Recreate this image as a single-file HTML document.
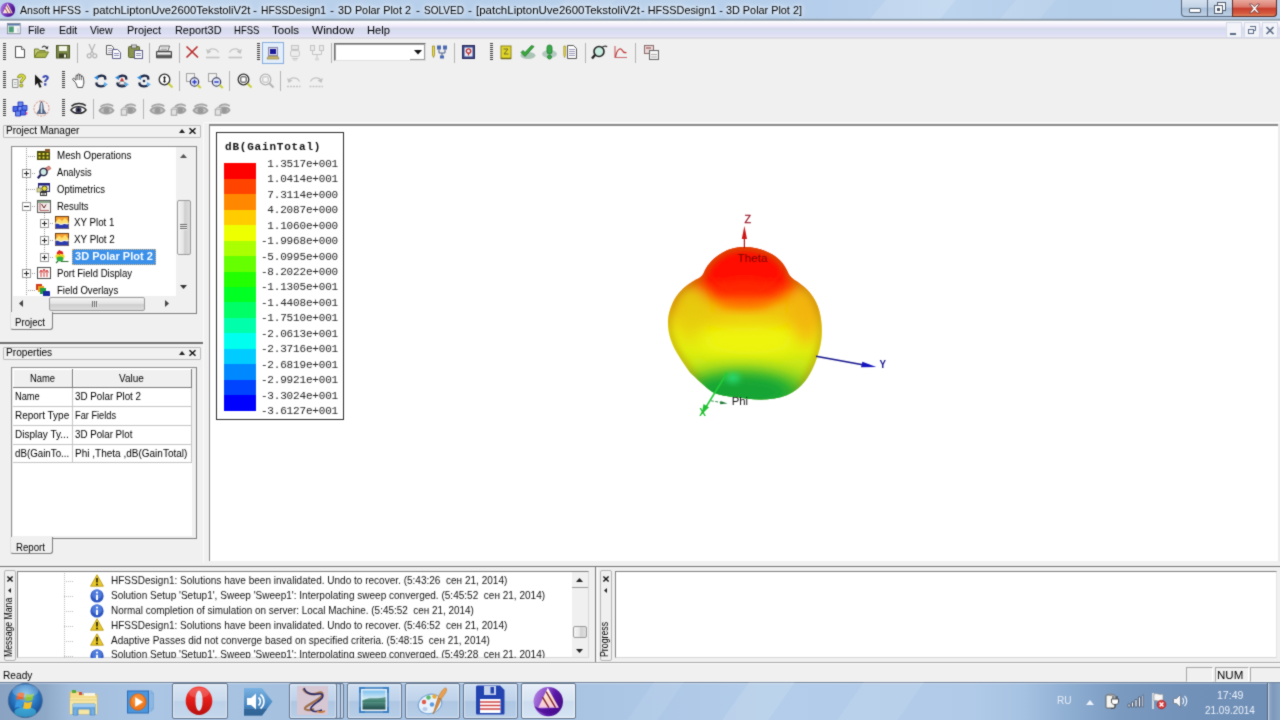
<!DOCTYPE html>
<html><head><meta charset="utf-8"><title>Ansoft HFSS</title>
<style>
*{box-sizing:border-box;margin:0;padding:0}
html,body{width:1280px;height:720px;overflow:hidden;background:#f0f0f0;font-family:"Liberation Sans",sans-serif;font-size:12px;color:#000}
.a{position:absolute}
svg{position:absolute;overflow:visible}
#title{left:0;top:0;width:1280px;height:21px;overflow:hidden;background:linear-gradient(180deg,rgba(0,0,0,0) 0,rgba(0,0,0,0) 18.3px,#8d9dab 19.2px,#8d9dab 20.3px,#f2f5f9 21px),linear-gradient(90deg,#bdd3ec 0,#c3d7ee 12%,#b9d0eb 25%,#b6ceea 40%,#bad1eb 52%,#b4cdea 62%,#bdd4ee 74%,#b4cde9 84%,#b7cfea 100%)}
#title .t{left:20px;top:3.700px;font-size:11px;line-height:12px;white-space:nowrap;color:#000;transform-origin:0 0;text-shadow:0 0 4px rgba(255,255,255,.9),0 0 7px rgba(255,255,255,.8),0 0 10px rgba(255,255,255,.6)}
#menu{left:0;top:21px;width:1280px;height:18px;background:linear-gradient(180deg,#fdfeff 0,#f6f3fc 3px,#efeafa 5px,#d6d8ec 7.5px,#d8e0ee 10px,#dcdcf6 12.5px,#e4e4f4 15.5px,#d2d3dc 17px,#e4e4e8 18px)}
#menu span{position:absolute;top:2.700px;font-size:11px;line-height:12px;white-space:nowrap;transform-origin:0 0}
.grip{position:absolute;width:3px;height:18px;background:repeating-linear-gradient(180deg,#3c3c3c 0,#3c3c3c 1px,rgba(0,0,0,0) 1px,rgba(0,0,0,0) 2px)}
.sep{position:absolute;width:1px;height:20px;background:#b2b2b2}
.hdr{position:absolute;height:13px;border:1px solid #b9b9b9;border-radius:1px;background:#f1f1f1;font-size:10px;line-height:10px;padding-left:2px;white-space:nowrap}
.tr{position:absolute;font-size:10.5px;white-space:nowrap;line-height:12px}
.msg{position:absolute;left:110px;font-size:10.5px;white-space:nowrap;line-height:12px;color:#111}
.lg{position:absolute;right:5px;font-family:"Liberation Mono",monospace;font-size:11px;letter-spacing:-0.18px;line-height:12px;white-space:pre;color:#262626}
#w{position:absolute;left:0;top:0;width:1280px;height:720px;overflow:hidden;background:#f0f0f0;filter:url(#soft)}
</style></head><body><svg width="0" height="0" style="position:absolute"><defs><filter id="soft" x="0" y="0" width="100%" height="100%" color-interpolation-filters="sRGB"><feConvolveMatrix order="3" kernelMatrix="0.03 0.09 0.03 0.09 0.52 0.09 0.03 0.09 0.03" divisor="1" edgeMode="duplicate" preserveAlpha="true"/></filter></defs></svg><div id="w">
<!-- TITLE BAR -->
<div id="title" class="a"><!-- streak --><div class="a" style="left:880px;top:-5px;width:70px;height:24px;background:rgba(255,255,255,.14);transform:skewX(-40deg)"></div><div class="a" style="left:1010px;top:-5px;width:40px;height:24px;background:rgba(255,255,255,.10);transform:skewX(-40deg)"></div><div class="a" style="left:560px;top:-5px;width:50px;height:24px;background:rgba(255,255,255,.08);transform:skewX(-40deg)"></div><div class="a t" style="left:20px;transform:scaleX(0.960)">Ansoft HFSS</div><div class="a t" style="left:84.5px;transform:scaleX(1.091)">-</div><div class="a t" style="left:92.5px;transform:scaleX(1.022)">patchLiptonUve2600TekstoliV2t</div><div class="a t" style="left:252.5px;transform:scaleX(1.091)">-</div><div class="a t" style="left:261px;transform:scaleX(0.933)">HFSSDesign1</div><div class="a t" style="left:329.5px;transform:scaleX(1.091)">-</div><div class="a t" style="left:338px;transform:scaleX(0.986)">3D Polar Plot 2</div><div class="a t" style="left:415.5px;transform:scaleX(1.091)">-</div><div class="a t" style="left:424px;transform:scaleX(0.913)">SOLVED</div><div class="a t" style="left:467.5px;transform:scaleX(1.091)">-</div><div class="a t" style="left:476px;transform:scaleX(1.043)">[patchLiptonUve2600TekstoliV2t</div><div class="a t" style="left:641px;transform:scaleX(0.986)">- HFSSDesign1 - 3D Polar Plot 2]</div>
<!-- app icon -->
<svg style="left:0px;top:2.200px" width="15.500" height="15.500" viewBox="0 0 16 16"><defs><linearGradient id="ti" x1="0" y1="0" x2="1" y2=".4"><stop offset="0" stop-color="#b88ae6"/><stop offset=".5" stop-color="#7a3cc0"/><stop offset="1" stop-color="#4a108c"/></linearGradient></defs><circle cx="8" cy="8" r="7.600" fill="url(#ti)"/><path d="M7.700 1.500 L13.200 11.500 H2.800Z" fill="#fde8dc"/><path d="M6.900 3.400 L11.600 11.500 M5.100 6.200 L8.300 11.500" stroke="#7a1a2a" stroke-width=".8"/></svg>
<!-- caption buttons -->
<div class="a" style="left:1181px;top:0;width:96px;height:17px;border:1px solid #56667a;border-top:none;border-radius:0 0 4px 4px;background:linear-gradient(180deg,#d4e0ee 0,#c3d3e6 45%,#a9bfd8 50%,#bccfe4 100%)"></div>
<div class="a" style="left:1207px;top:0;width:1px;height:16px;background:#56667a"></div>
<div class="a" style="left:1232px;top:0;width:45px;height:17px;border:1px solid #5b2a26;border-top:none;border-radius:0 0 4px 0;background:linear-gradient(180deg,#e9a99d 0,#d9776a 45%,#c63d2c 50%,#d65b40 85%,#e08a60 100%)"></div>
<div class="a" style="left:1189px;top:8px;width:12px;height:5px;border:1px solid #4c5a6b;border-radius:1px;background:#fff"></div>
<svg style="left:1213px;top:1px" width="14" height="14" viewBox="0 0 14 14"><rect x="4.5" y="1.5" width="8" height="8" fill="#fff" stroke="#4c5a6b"/><rect x="1.5" y="4.5" width="8" height="8" fill="#fff" stroke="#4c5a6b"/><rect x="4" y="7" width="3" height="3" fill="#4c5a6b"/></svg>
<svg style="left:1248px;top:3px" width="13" height="11" viewBox="0 0 13 11"><path d="M1.5 1 L4 1 L6.5 3.8 L9 1 L11.5 1 L8 5.5 L11.5 10 L9 10 L6.5 7.2 L4 10 L1.5 10 L5 5.5Z" fill="#fff" stroke="#6b3b3b" stroke-width=".8"/></svg>
</div>
<!-- MENU BAR -->
<div id="menu" class="a">
<svg style="left:6.800px;top:2.200px" width="14.500" height="12" viewBox="0 0 17 14"><rect x=".5" y=".5" width="15" height="12" fill="#fff" stroke="#7b8794"/><rect x="1" y="1" width="14" height="2" fill="#5a78a8"/><rect x="2" y="4" width="6" height="7" fill="#4e9c78"/><rect x="9" y="4" width="5" height="7" fill="#f2f2f2"/><rect x="12" y="6" width="2" height="5" fill="#c9d3e0"/></svg>
<span style="left:28.4px;transform:scaleX(0.959)">File</span><span style="left:58.6px;transform:scaleX(0.964)">Edit</span><span style="left:90.3px;transform:scaleX(0.951)">View</span><span style="left:126.9px;transform:scaleX(0.993)">Project</span><span style="left:174.5px;transform:scaleX(0.987)">Report3D</span><span style="left:233.8px;transform:scaleX(0.868)">HFSS</span><span style="left:272px;transform:scaleX(1.052)">Tools</span><span style="left:312px;transform:scaleX(1.073)">Window</span><span style="left:366.5px;transform:scaleX(1.017)">Help</span>
<!-- MDI buttons -->
<div class="a" style="left:1226px;top:1px;width:16px;height:16px;border:1px solid #d5d9e6;background:#f2f4fa"></div>
<div class="a" style="left:1244px;top:1px;width:16px;height:16px;border:1px solid #d5d9e6;background:#f2f4fa"></div>
<div class="a" style="left:1262px;top:1px;width:16px;height:16px;border:1px solid #d5d9e6;background:#f2f4fa"></div>
<div class="a" style="left:1230px;top:12px;width:6px;height:2px;background:#5a6a84"></div>
<svg style="left:1247px;top:4px" width="10" height="10" viewBox="0 0 10 10"><path d="M3.5 1.5 H8.5 V5.5 H7" fill="none" stroke="#5a6a84"/><path d="M3 1.5 H9" stroke="#5a6a84"/><rect x="1.5" y="4.5" width="5" height="4" fill="none" stroke="#5a6a84"/><path d="M1 4.5 H7" stroke="#5a6a84"/></svg>
<svg style="left:1265px;top:5px" width="10" height="9" viewBox="0 0 10 9"><path d="M1.5 1 L8.5 8 M8.5 1 L1.5 8" stroke="#5a6a84" stroke-width="1.6"/></svg>
</div>
<!-- TOOLBAR ROW 1 -->
<div id="tb1" class="a" style="left:0;top:39px;width:1280px;height:28px">
<div class="grip" style="left:3px;top:4px"></div>
<!-- new -->
<svg style="left:12px;top:5px" width="16" height="16" viewBox="0 0 16 16"><path d="M3.5 2.5 H9.5 L12.5 5.5 V13.5 H3.5Z" fill="#fff" stroke="#4a4a4a"/><path d="M9.5 2.5 V5.5 H12.5" fill="#e8e8e8" stroke="#4a4a4a" stroke-width=".8"/></svg>
<!-- open -->
<svg style="left:33px;top:5px" width="17" height="16" viewBox="0 0 17 16"><path d="M1.5 13.5 V5 H5.5 L6.5 6.5 H12 V8" fill="#c9cf7a" stroke="#6f7a2a"/><path d="M1.5 13.5 L4.5 8 H15.5 L12.5 13.5Z" fill="#a9b44a" stroke="#6f7a2a"/><path d="M9 3.5 C10.5 1.5 13 1.8 14 4" fill="none" stroke="#333" stroke-width="1.1"/><path d="M15.5 2 L14.5 5.5 L12 4Z" fill="#333"/></svg>
<!-- save -->
<svg style="left:55px;top:5px" width="16" height="16" viewBox="0 0 16 16"><rect x="1.5" y="1.5" width="13" height="12.5" fill="#7c8a47" stroke="#4b5628"/><rect x="4" y="2" width="8" height="5" fill="#f3f4ea"/><rect x="4" y="9.5" width="8" height="4.5" fill="#3e4424"/><rect x="9" y="10.5" width="2" height="3" fill="#f3f4ea"/></svg>
<div class="sep" style="left:77px;top:4px"></div>
<!-- cut (gray) -->
<svg style="left:84px;top:4px" width="16" height="17" viewBox="0 0 16 17"><path d="M5 1 L9.5 11 M11 1 L6.5 11" stroke="#b4b4b4" stroke-width="1.2" fill="none"/><circle cx="5.2" cy="12.8" r="2" fill="none" stroke="#b4b4b4" stroke-width="1.2"/><circle cx="10.8" cy="12.8" r="2" fill="none" stroke="#b4b4b4" stroke-width="1.2"/></svg>
<!-- copy -->
<svg style="left:105px;top:5px" width="17" height="16" viewBox="0 0 17 16"><path d="M1.5 1.5 H6.5 L8.5 3.5 V10.5 H1.5Z" fill="#fff" stroke="#5a5a5a"/><path d="M3 4.5 H7 M3 6.5 H7 M3 8.5 H7" stroke="#8a8a9a" stroke-width=".8"/><path d="M7.5 5.5 H12.5 L15.5 8.5 V14.5 H7.5Z" fill="#fff" stroke="#5b5b8a"/><path d="M9 9.5 H14 M9 11.5 H14" stroke="#7a7aa8" stroke-width=".9"/></svg>
<!-- paste -->
<svg style="left:127px;top:5px" width="17" height="16" viewBox="0 0 17 16"><rect x="1.5" y="2.5" width="11" height="11" rx="1" fill="#8a9450" stroke="#5a6330"/><rect x="4.5" y="1" width="5" height="3" fill="#d8d8d8" stroke="#5a5a5a" stroke-width=".8"/><rect x="7.5" y="6.5" width="8" height="8" fill="#fff" stroke="#5b5b8a"/><path d="M9 9.5 H14 M9 11.5 H14" stroke="#7a7aa8" stroke-width=".9"/></svg>
<div class="sep" style="left:149px;top:4px"></div>
<!-- print -->
<svg style="left:155px;top:5px" width="18" height="16" viewBox="0 0 18 16"><path d="M5 2 H14.5 L13 7 H3.5Z" fill="#fff" stroke="#555" stroke-width=".9"/><path d="M6 4 H12.5 M5.5 5.5 H12" stroke="#888" stroke-width=".7"/><path d="M1.5 7.5 H16.5 V12 H1.5Z" fill="#bdbdbd" stroke="#444"/><path d="M1.5 12 H16.5 V13.8 H1.5Z" fill="#6b6b6b" stroke="#444"/><path d="M3 9.5 H15" stroke="#fff" stroke-width=".8"/></svg>
<div class="sep" style="left:179px;top:4px"></div>
<!-- delete X -->
<svg style="left:185px;top:6px" width="15" height="14" viewBox="0 0 15 14"><path d="M1.5 1.5 L13 12.5 M12.5 1.5 L1.5 12.5" stroke="#b82a2a" stroke-width="1.6" fill="none"/></svg>
<!-- undo / redo gray -->
<svg style="left:205px;top:7px" width="16" height="13" viewBox="0 0 16 13"><path d="M3 6 C4 2 11 1.5 13.5 6.5" fill="none" stroke="#c2c2c2" stroke-width="1.2"/><path d="M1 3 L2.5 8 L6.5 5.5Z" fill="#c2c2c2"/><path d="M1 11.5 H14.5" stroke="#c2c2c2" stroke-width="1.6"/></svg>
<svg style="left:227px;top:7px" width="16" height="13" viewBox="0 0 16 13"><path d="M13 6 C12 2 5 1.5 2.5 6.5" fill="none" stroke="#c2c2c2" stroke-width="1.2"/><path d="M15 3 L13.5 8 L9.5 5.5Z" fill="#c2c2c2"/><path d="M1.5 11.5 H15" stroke="#c2c2c2" stroke-width="1.6"/></svg>
<div class="grip" style="left:257px;top:4px"></div>
<!-- selected button -->
<div class="a" style="left:262px;top:3px;width:22px;height:22px;border:1px solid #84acdd;background:#e3eefb"></div>
<svg style="left:267px;top:8px" width="12" height="13" viewBox="0 0 12 13"><rect x="1.5" y=".5" width="9" height="8" fill="#d9d9e8" stroke="#8a8aa8"/><rect x="3" y="2" width="6" height="5" fill="#1a1a9a"/><path d="M1 9.5 H11 L12 12 H0Z" fill="#c8b46a" stroke="#8a7a3a" stroke-width=".6"/></svg>
<svg style="left:289px;top:6px" width="12" height="16" viewBox="0 0 12 16"><rect x="2.5" y=".5" width="7" height="4" fill="#e6e6e6" stroke="#c4c4c4"/><rect x="1.5" y="5.5" width="9" height="6" rx="2" fill="#ececec" stroke="#c4c4c4"/><path d="M3 13.5 H9 M4 15 H8" stroke="#c9c9c9"/></svg>
<svg style="left:309px;top:6px" width="16" height="16" viewBox="0 0 16 16"><rect x="1.5" y=".5" width="4" height="5" fill="#e9e9e9" stroke="#c4c4c4"/><rect x="10.5" y=".5" width="4" height="5" fill="#e9e9e9" stroke="#c4c4c4"/><path d="M3.5 6 V9.5 H12.5 V6 M8 9.5 V13" fill="none" stroke="#c4c4c4"/><rect x="6" y="13" width="4" height="2.5" fill="#d9d9d9"/></svg>
<div class="sep" style="left:331px;top:4px"></div>
<!-- combo -->
<div class="a" style="left:334px;top:4px;width:92px;height:18px;background:#fff;border:1px solid #6e6e6e;border-right-color:#e0e0e0;border-bottom-color:#e0e0e0;box-shadow:inset 1px 1px 0 #a0a0a0"></div>
<div class="a" style="left:410px;top:6px;width:15px;height:15px;background:#fff;border-right:1px solid #999;border-bottom:1px solid #999"></div>
<svg style="left:414px;top:11px" width="8" height="5" viewBox="0 0 8 5"><path d="M0 0 H8 L4 4.5Z" fill="#111"/></svg>
<!-- pencil+net -->
<svg style="left:431px;top:5px" width="17" height="16" viewBox="0 0 17 16"><path d="M1.5 2 V11 L2.5 13.5 L3.5 11 V2Z" fill="#f2e23a" stroke="#8a7a1a" stroke-width=".7"/><rect x="6" y="1.5" width="4" height="4" fill="#4a6ab0"/><rect x="12" y="1.5" width="4" height="4" fill="#4a6ab0"/><path d="M8 5.5 V9 H14 V5.5 M11 9 V12" fill="none" stroke="#4a5a8a"/><rect x="9" y="11.5" width="4" height="3" fill="#4a6ab0"/></svg>
<div class="sep" style="left:454px;top:4px"></div>
<!-- Q box -->
<svg style="left:462px;top:6px" width="13" height="14" viewBox="0 0 13 14"><rect x=".5" y=".5" width="12" height="13" fill="#3a4a8a" stroke="#2a2a5a"/><rect x="2.5" y="2.5" width="8" height="9" fill="#e8ecf8"/><circle cx="6.5" cy="6" r="2.2" fill="none" stroke="#c02a2a" stroke-width="1.3"/><path d="M6.5 8 V10.5" stroke="#c02a2a" stroke-width="1.2"/></svg>
<div class="grip" style="left:490px;top:4px"></div>
<!-- yellow book -->
<svg style="left:500px;top:6px" width="12" height="15" viewBox="0 0 12 15"><rect x="1" y="1" width="10" height="12.5" fill="#e2d62a" stroke="#8a841a"/><path d="M1 13.5 H11" stroke="#6a6414" stroke-width="1.4"/><path d="M3.5 4 L8 4 L4 9 L8.5 9" fill="none" stroke="#6a6a2a" stroke-width="1"/></svg>
<!-- green check -->
<svg style="left:519px;top:5px" width="17" height="16" viewBox="0 0 17 16"><ellipse cx="9" cy="11.5" rx="7.5" ry="3.5" fill="#a9c4b4"/><path d="M2 8.5 L6 12.5 L15 2.5 L12.5 1.5 L6 8.5 L4 6.5Z" fill="#3aa83a" stroke="#1a7a2a" stroke-width=".8"/></svg>
<!-- green excl -->
<svg style="left:541px;top:5px" width="17" height="16" viewBox="0 0 17 16"><ellipse cx="8.5" cy="10" rx="7.5" ry="4" fill="#b4c8c0"/><rect x="6" y="1" width="5" height="9" rx="2.5" fill="#3aa84a" stroke="#1a7a2a" stroke-width=".8"/><circle cx="8.5" cy="13" r="2" fill="#3aa84a" stroke="#1a7a2a" stroke-width=".8"/></svg>
<!-- doc w pencil -->
<svg style="left:563px;top:5px" width="15" height="16" viewBox="0 0 15 16"><path d="M.8 2 V11 L1.6 13.5 L2.4 11 V2Z" fill="#f2e23a" stroke="#8a7a1a" stroke-width=".6"/><path d="M4.5 1.5 H10.5 L13.5 4.5 V14.5 H4.5Z" fill="#fff" stroke="#555"/><path d="M6 5.5 H12 M6 7.5 H12 M6 9.5 H12 M6 11.5 H12" stroke="#8a8ab0" stroke-width=".9"/></svg>
<div class="sep" style="left:585px;top:4px"></div>
<!-- lens -->
<svg style="left:591px;top:6px" width="17" height="15" viewBox="0 0 17 15"><circle cx="8" cy="6.5" r="5" fill="#c8ece0" stroke="#222" stroke-width="1.6"/><path d="M4 10 L1 13.5" stroke="#222" stroke-width="2.4"/><path d="M11 2.5 C13 .5 15.5 1 16 2" fill="none" stroke="#333" stroke-width="1.2"/></svg>
<!-- curve -->
<svg style="left:613px;top:6px" width="15" height="14" viewBox="0 0 15 14"><path d="M2 1 V12.5 H14" fill="none" stroke="#c86a6a" stroke-width="1.2"/><path d="M2.5 12 C4 3 8 3 9 5 C10 7 12 8 13.5 7.5" fill="none" stroke="#c03030" stroke-width="1.2"/></svg>
<div class="sep" style="left:635px;top:4px"></div>
<!-- last -->
<svg style="left:643px;top:6px" width="16" height="15" viewBox="0 0 16 15"><rect x="1.5" y=".5" width="9" height="8" fill="#e8d8d8" stroke="#8a6a6a"/><rect x="6.5" y="5.5" width="9" height="9" fill="#f4f4f4" stroke="#666"/><path d="M8.5 9.5 h1 m1 0 h1 m1 0 h1 M8.5 12 h1 m1 0 h1 m1 0 h1" stroke="#666"/><rect x="3" y="2" width="5" height="2" fill="#b88"/></svg>
</div>
<!-- shared symbols -->
<svg width="0" height="0" style="left:0;top:0"><defs>
<symbol id="rot" viewBox="0 0 14 14"><path d="M2.800 4 C4.200 1.300 9.500 1 11 3 L11.400 5.600" fill="none" stroke="#1d2744" stroke-width="2.300"/><path d="M2.300 8.400 L2.800 10.800 C4.500 13 9.800 12.800 11.300 10.600" fill="none" stroke="#1d2744" stroke-width="2.300"/><path d="M0 3.600 L4.200 1.400 L4 6Z" fill="#2a86dc"/><path d="M14 10.400 L9.800 12.600 L10 8Z" fill="#58aef0"/></symbol>
<symbol id="geye" viewBox="0 0 16 14"><path d="M1 8.5 C3.5 4 12.5 4 15 8.500 C12.5 12.5 3.5 12.5 1 8.500Z" fill="#c4c4c4" stroke="#a0a0a0" stroke-width="1.8"/><circle cx="8" cy="8.500" r="3" fill="#989898"/><path d="M1.500 4.200 C5 .8 11 .8 15 3.200 L14.500 5 C11 3 5.500 3 2.500 5.500Z" fill="#a4a4a4"/></symbol>
<symbol id="geye2" viewBox="0 0 16 14"><path d="M3.500 8.500 C5.500 4.500 13 4.200 15 8 C13 12 6.500 12 3.500 8.500Z" fill="#c4c4c4" stroke="#a0a0a0" stroke-width="1.800"/><circle cx="9.800" cy="8.200" r="2.700" fill="#989898"/><path d="M4 4 C7 .8 12 .8 15.500 3 L15 4.800 C12 3 7.500 3 5 5.300Z" fill="#a4a4a4"/><rect x=".8" y="7.500" width="5.400" height="5.700" fill="#e2e2e2" stroke="#a8a8a8" stroke-width="1.100"/><path d="M.8 7.500 L2.800 5.300 H7.600 L6.200 7.500" fill="#d4d4d4" stroke="#a8a8a8" stroke-width=".9"/></symbol>
</defs></svg>
<!-- TOOLBAR ROW 2 -->
<div id="tb2" class="a" style="left:0;top:67px;width:1280px;height:28px">
<div class="grip" style="left:3px;top:4px"></div>
<!-- help doc -->
<svg style="left:12px;top:6px" width="15" height="16" viewBox="0 0 15 16"><path d="M.5 6.5 H6 V14.5 H.5Z" fill="#f4f4f4" stroke="#8a8a8a"/><path d="M2 9.5 H4.5 M2 11.5 H4.5" stroke="#9aa" stroke-width=".8"/><path d="M5.5 4.5 C5.5 0 13.5 0 13.5 4.5 C13.5 7 10.5 7 10.5 9.5 H8 C8 6.5 10.5 6.3 10.5 4.6 C10.5 3.3 8.3 3.3 8.2 4.8Z" fill="#d8dc3a" stroke="#7a8020" stroke-width=".8"/><rect x="7.8" y="11" width="3" height="3" rx="1" fill="#d8dc3a" stroke="#7a8020" stroke-width=".8"/></svg>
<!-- arrow ? -->
<svg style="left:34px;top:7px" width="16" height="15" viewBox="0 0 16 15"><path d="M1 .5 V11.5 L3.6 9 L5.6 13.8 L7.6 13 L5.6 8.4 H9Z" fill="#1a1a1a"/><path d="M8.3 3.8 C8.3 .2 14.8 .2 14.8 3.8 C14.8 6 12.3 6 12.3 8 H10.2 C10.2 5.4 12.5 5.3 12.5 3.9 C12.5 2.8 10.6 2.8 10.5 4Z" fill="#3a4ab0"/><rect x="10.1" y="9.2" width="2.3" height="2.4" fill="#3a4ab0"/></svg>
<div class="grip" style="left:62px;top:4px"></div>
<!-- hand -->
<svg style="left:71px;top:6px" width="16" height="16" viewBox="0 0 16 16"><path d="M4.5 9.5 L2 7 C1 6 2.2 4.8 3.2 5.6 L5 7.2 V3 C5 1.8 6.8 1.8 6.8 3 V1.8 C6.8 .6 8.6 .6 8.6 1.8 V2.6 C8.6 1.6 10.4 1.6 10.4 2.8 V4 C10.4 3 12.2 3 12.2 4.2 L12.8 8 C13.2 11 12 12.5 11.5 14.5 H6.5 C6 12.5 5.2 11 4.5 9.5Z" fill="#fff" stroke="#3a3a3a" stroke-width=".9"/><path d="M6.8 3 V7 M8.6 2.6 V7 M10.4 4 V7.2" stroke="#3a3a3a" stroke-width=".7"/></svg>
<svg style="left:94px;top:7px" width="14" height="14"><use href="#rot"/></svg>
<svg style="left:115px;top:7px" width="14" height="14"><use href="#rot"/><path d="M7 3.5 L9 7 H5Z" fill="#d03030"/><ellipse cx="7" cy="9" rx="3" ry="1.5" fill="#fff" stroke="#445" stroke-width=".6"/></svg>
<svg style="left:137px;top:7px" width="14" height="14"><use href="#rot"/><circle cx="7" cy="7" r="1.3" fill="#1f2a4a"/></svg>
<!-- zoom -->
<svg style="left:158px;top:6px" width="16" height="16" viewBox="0 0 16 16"><circle cx="6.5" cy="6.5" r="5.3" fill="#fff" stroke="#2a2a2a" stroke-width="1.3"/><path d="M6.5 3 L8 5 H5Z M6.5 10 L8 8 H5Z" fill="#111"/><path d="M6.5 4.5 V8.5" stroke="#111" stroke-width="1.4"/><path d="M10.5 10.5 L14.5 14.5" stroke="#c8d03a" stroke-width="2.2"/></svg>
<div class="sep" style="left:179px;top:4px"></div>
<!-- zoom in / out (dotted box) -->
<svg style="left:186px;top:6px" width="16" height="16" viewBox="0 0 16 16"><rect x=".5" y=".5" width="8" height="8" fill="none" stroke="#555" stroke-dasharray="1 1"/><circle cx="8.5" cy="9" r="4.2" fill="#dfe6fa" stroke="#2a2a4a" stroke-width="1.1"/><path d="M6.3 9 H10.7 M8.5 6.8 V11.2" stroke="#2a3ac0" stroke-width="1.5"/><path d="M11.5 12 L14.8 15" stroke="#c8d03a" stroke-width="2.2"/></svg>
<svg style="left:208px;top:6px" width="16" height="16" viewBox="0 0 16 16"><rect x=".5" y=".5" width="8" height="8" fill="none" stroke="#555" stroke-dasharray="1 1"/><circle cx="8.5" cy="9" r="4.2" fill="#dfe6fa" stroke="#2a2a4a" stroke-width="1.1"/><path d="M6.3 9 H10.7" stroke="#2a3ac0" stroke-width="1.5"/><path d="M11.5 12 L14.8 15" stroke="#c8d03a" stroke-width="2.2"/></svg>
<div class="sep" style="left:229px;top:4px"></div>
<!-- fit -->
<svg style="left:237px;top:6px" width="16" height="16" viewBox="0 0 16 16"><circle cx="6.5" cy="6.5" r="5.3" fill="#fff" stroke="#2a2a2a" stroke-width="1.3"/><rect x="3.8" y="3.8" width="5.4" height="5.4" rx="1" fill="none" stroke="#333" stroke-width="1"/><path d="M10.5 10.5 L14.5 14.5" stroke="#c8d03a" stroke-width="2.2"/></svg>
<svg style="left:259px;top:6px" width="16" height="16" viewBox="0 0 16 16"><circle cx="6.5" cy="6.5" r="5.3" fill="#f6f6f6" stroke="#b4b4b4" stroke-width="1.3"/><rect x="3.8" y="3.8" width="5.4" height="5.4" rx="1" fill="none" stroke="#b8b8b8" stroke-width="1"/><path d="M10.5 10.5 L14.5 14.5" stroke="#b4b4b4" stroke-width="2.2"/></svg>
<div class="sep" style="left:280px;top:4px"></div>
<svg style="left:286px;top:8px" width="16" height="13" viewBox="0 0 16 13"><path d="M3 6 C4 2 11 1.5 13.5 6.5" fill="none" stroke="#c2c2c2" stroke-width="1.2"/><path d="M1 3 L2.5 8 L6.5 5.5Z" fill="#c2c2c2"/><path d="M1 11.5 h2 m1 0 h2 m1 0 h2 m1 0 h2 m1 0 h1.5" stroke="#c2c2c2" stroke-width="1.4"/></svg>
<svg style="left:308px;top:8px" width="16" height="13" viewBox="0 0 16 13"><path d="M13 6 C12 2 5 1.5 2.5 6.5" fill="none" stroke="#c2c2c2" stroke-width="1.2"/><path d="M15 3 L13.5 8 L9.5 5.5Z" fill="#c2c2c2"/><path d="M1.5 11.5 h2 m1 0 h2 m1 0 h2 m1 0 h2 m1 0 h1.5" stroke="#c2c2c2" stroke-width="1.4"/></svg>
</div>
<!-- TOOLBAR ROW 3 -->
<div id="tb3" class="a" style="left:0;top:95px;width:1280px;height:28px">
<div class="grip" style="left:3px;top:4px"></div>
<!-- blue cubes -->
<svg style="left:12px;top:6px" width="16" height="16" viewBox="0 0 16 16"><g stroke="#1a2ab0" stroke-width=".8"><path d="M6 1 L11 1 L11 5.5 L6 5.5Z" fill="#6a8af0"/><path d="M1 5.5 L6 5.5 L6 10.5 L1 10.5Z" fill="#4a6ae8"/><path d="M6 5.5 L11 5.5 L11 10.5 L6 10.5Z" fill="#7a9af4"/><path d="M10 4.5 L15 4.5 L15 9.5 L10 9.5Z" fill="#5a7aec"/><path d="M3.5 10 L8.5 10 L8.5 15 L3.5 15Z" fill="#6a8af0"/><path d="M8.5 9 L13.5 9 L13.5 14 L8.5 14Z" fill="#4a6ae8"/></g><path d="M13 12 L15.5 11 L15 14Z" fill="#e04090"/></svg>
<!-- rocket circle -->
<svg style="left:33px;top:5px" width="17" height="17" viewBox="0 0 17 17"><circle cx="8.5" cy="8.5" r="7.5" fill="#f6f0f0" stroke="#d08a7a" stroke-width="1" stroke-dasharray="2.4 1.2"/><path d="M8.5 1.5 C10.3 4 10.5 9 10.2 13.5 H6.8 C6.5 9 6.7 4 8.5 1.5Z" fill="#8aa0b8" stroke="#3a4a6a" stroke-width=".8"/><path d="M6.8 9 L3.8 13.5 H6.8Z M10.2 9 L13.2 13.5 H10.2Z" fill="#5a7090" stroke="#3a4a6a" stroke-width=".6"/><path d="M8.5 3 V13" stroke="#e8eef6" stroke-width=".9"/></svg>
<div class="grip" style="left:62px;top:4px"></div>
<!-- eye -->
<svg style="left:70px;top:7px" width="17" height="14" viewBox="0 0 17 14"><path d="M1 8 C4 3.5 13 3.5 16 8 C13 12.5 4 12.5 1 8Z" fill="#fff" stroke="#222" stroke-width="1.4"/><circle cx="8.5" cy="8" r="3" fill="#3a3a5a"/><circle cx="8.5" cy="8" r="1.2" fill="#111"/><path d="M1.5 4.2 C5 .8 12 .8 15.8 3.6" fill="none" stroke="#222" stroke-width="1.6"/></svg>
<div class="sep" style="left:93px;top:4px"></div>
<svg style="left:98px;top:7px" width="17" height="14"><use href="#geye"/></svg>
<svg style="left:120px;top:7px" width="17" height="14"><use href="#geye2"/></svg>
<div class="sep" style="left:143px;top:4px"></div>
<svg style="left:149px;top:7px" width="17" height="14"><use href="#geye"/></svg>
<svg style="left:170px;top:7px" width="17" height="14"><use href="#geye2"/></svg>
<svg style="left:192px;top:7px" width="17" height="14"><use href="#geye"/></svg>
<svg style="left:214px;top:7px" width="17" height="14"><use href="#geye2"/></svg>
</div>
<!-- LEFT: PROJECT MANAGER -->
<div id="pm" class="a" style="left:0;top:123px;width:206px;height:220px">
<div class="hdr" style="left:3px;top:1.600px;width:198px"><span style="display:inline-block;transform-origin:0 0;transform:scaleX(1)">Project Manager</span></div>
<svg style="left:179px;top:6px" width="6" height="4" viewBox="0 0 6 4"><path d="M0 4 L3 0 L6 4Z" fill="#222"/></svg>
<svg style="left:189px;top:5px" width="7" height="6" viewBox="0 0 7 6"><path d="M.5 .3 L6.5 5.7 M6.5 .3 L.5 5.7" stroke="#111" stroke-width="1.5"/></svg>
<div class="a" style="left:11px;top:22.600px;width:186px;height:168.400px;background:#f0f0f0;border:1.5px solid #7c7c7c;border-left-color:#8c8c8c;border-top-color:#8c8c8c"></div><div class="a" style="left:12.500px;top:23.500px;width:179.500px;height:165px;background:#fff"></div>
<div class="a" style="left:14px;top:25px;width:162px;height:148px;overflow:hidden">
<div class="a" style="left:12.0px;top:0;width:1px;height:148px;background:repeating-linear-gradient(180deg,#9a9a9a 0,#9a9a9a 1px,transparent 1px,transparent 2px)"></div>
<div class="a" style="left:30.0px;top:65.0px;width:1px;height:44px;background:repeating-linear-gradient(180deg,#9a9a9a 0,#9a9a9a 1px,transparent 1px,transparent 2px)"></div>
<div class="a" style="left:12.0px;top:7.7px;width:10px;height:1px;background:repeating-linear-gradient(90deg,#9a9a9a 0,#9a9a9a 1px,transparent 1px,transparent 2px)"></div>
<div class="tr" style="left:42.5px;top:1.2px;transform-origin:0 0;transform:scaleX(0.930)">Mesh Operations</div>
<div class="a" style="left:12.0px;top:24.5px;width:10px;height:1px;background:repeating-linear-gradient(90deg,#9a9a9a 0,#9a9a9a 1px,transparent 1px,transparent 2px)"></div>
<div class="a" style="left:8.0px;top:20.5px;width:9px;height:9px;border:1px solid #9a9a9a;background:#fff"></div>
<div class="a" style="left:10.0px;top:24.5px;width:5px;height:1px;background:#222"></div>
<div class="a" style="left:12.0px;top:22.5px;width:1px;height:5px;background:#222"></div>
<div class="tr" style="left:42.5px;top:18.0px;transform-origin:0 0;transform:scaleX(0.885)">Analysis</div>
<div class="a" style="left:12.0px;top:41.3px;width:10px;height:1px;background:repeating-linear-gradient(90deg,#9a9a9a 0,#9a9a9a 1px,transparent 1px,transparent 2px)"></div>
<div class="tr" style="left:42.5px;top:34.8px;transform-origin:0 0;transform:scaleX(0.904)">Optimetrics</div>
<div class="a" style="left:12.0px;top:58.1px;width:10px;height:1px;background:repeating-linear-gradient(90deg,#9a9a9a 0,#9a9a9a 1px,transparent 1px,transparent 2px)"></div>
<div class="a" style="left:8.0px;top:54.1px;width:9px;height:9px;border:1px solid #9a9a9a;background:#fff"></div>
<div class="a" style="left:10.0px;top:58.1px;width:5px;height:1px;background:#222"></div>
<div class="tr" style="left:42.5px;top:51.6px;transform-origin:0 0;transform:scaleX(0.899)">Results</div>
<div class="a" style="left:30.0px;top:74.9px;width:10px;height:1px;background:repeating-linear-gradient(90deg,#9a9a9a 0,#9a9a9a 1px,transparent 1px,transparent 2px)"></div>
<div class="a" style="left:26.0px;top:70.9px;width:9px;height:9px;border:1px solid #9a9a9a;background:#fff"></div>
<div class="a" style="left:28.0px;top:74.9px;width:5px;height:1px;background:#222"></div>
<div class="a" style="left:30.0px;top:72.9px;width:1px;height:5px;background:#222"></div>
<div class="tr" style="left:60.3px;top:68.4px;transform-origin:0 0;transform:scaleX(0.927)">XY Plot 1</div>
<div class="a" style="left:30.0px;top:91.7px;width:10px;height:1px;background:repeating-linear-gradient(90deg,#9a9a9a 0,#9a9a9a 1px,transparent 1px,transparent 2px)"></div>
<div class="a" style="left:26.0px;top:87.7px;width:9px;height:9px;border:1px solid #9a9a9a;background:#fff"></div>
<div class="a" style="left:28.0px;top:91.7px;width:5px;height:1px;background:#222"></div>
<div class="a" style="left:30.0px;top:89.7px;width:1px;height:5px;background:#222"></div>
<div class="tr" style="left:60.3px;top:85.2px;transform-origin:0 0;transform:scaleX(0.936)">XY Plot 2</div>
<div class="a" style="left:30.0px;top:108.5px;width:10px;height:1px;background:repeating-linear-gradient(90deg,#9a9a9a 0,#9a9a9a 1px,transparent 1px,transparent 2px)"></div>
<div class="a" style="left:26.0px;top:104.5px;width:9px;height:9px;border:1px solid #9a9a9a;background:#fff"></div>
<div class="a" style="left:28.0px;top:108.5px;width:5px;height:1px;background:#222"></div>
<div class="a" style="left:30.0px;top:106.5px;width:1px;height:5px;background:#222"></div>
<div class="a" style="left:58.3px;top:100.7px;width:84px;height:16.5px;background:#3b90ea;border:1px dotted #d8b070"></div>
<div class="tr" style="left:61.2px;top:102.0px;color:#fff;font-weight:bold;transform-origin:0 0;transform:scaleX(1.05)">3D Polar Plot 2</div>
<div class="a" style="left:12.0px;top:125.3px;width:10px;height:1px;background:repeating-linear-gradient(90deg,#9a9a9a 0,#9a9a9a 1px,transparent 1px,transparent 2px)"></div>
<div class="a" style="left:8.0px;top:121.3px;width:9px;height:9px;border:1px solid #9a9a9a;background:#fff"></div>
<div class="a" style="left:10.0px;top:125.3px;width:5px;height:1px;background:#222"></div>
<div class="a" style="left:12.0px;top:123.3px;width:1px;height:5px;background:#222"></div>
<div class="tr" style="left:42.5px;top:118.8px;transform-origin:0 0;transform:scaleX(0.912)">Port Field Display</div>
<div class="a" style="left:12.0px;top:142.1px;width:10px;height:1px;background:repeating-linear-gradient(90deg,#9a9a9a 0,#9a9a9a 1px,transparent 1px,transparent 2px)"></div>
<div class="tr" style="left:42.5px;top:135.6px;transform-origin:0 0;transform:scaleX(0.912)">Field Overlays</div>
<svg style="left:23.0px;top:1.2px" width="14" height="13" viewBox="0 0 14 13"><rect x="0" y="2" width="13" height="9" fill="#4a4a10"/><path d="M1.5 4 h2 v2 h-2z M5.5 4 h2 v2 h-2z M9.5 4 h2 v2 h-2z M1.5 7.5 h2 v2 h-2z M5.5 7.5 h2 v2 h-2z M9.5 7.5 h2 v2 h-2z" fill="#e8e03a"/><rect x="8" y="0" width="5" height="3" fill="#8a5a2a"/></svg>
<svg style="left:23.0px;top:18.0px" width="14" height="13" viewBox="0 0 14 13"><path d="M7 3 L12 0 L14 2.5 L9.5 5.5Z" fill="#e08a7a" stroke="#8a3a3a" stroke-width=".5"/><circle cx="6.5" cy="6" r="3.6" fill="#cfeae4" stroke="#1a1a3a" stroke-width="1.4"/><path d="M3.8 8.8 L.8 12.2" stroke="#1a1a5a" stroke-width="2.2"/></svg>
<svg style="left:23.0px;top:34.8px" width="14" height="13" viewBox="0 0 14 13"><rect x="1.5" y=".5" width="11" height="8" fill="#e8e8f4" stroke="#22225a"/><rect x="1.5" y=".5" width="11" height="2" fill="#22228a"/><circle cx="7.5" cy="5.5" r="2.6" fill="#e8e03a" stroke="#4a4a10"/><rect x="0" y="5" width="4" height="4" fill="#d8d890" stroke="#6a6a3a" stroke-width=".6"/><rect x="3.5" y="9.5" width="6" height="3" fill="#fff" stroke="#333"/><path d="M5 11 H8" stroke="#333"/></svg>
<svg style="left:23.0px;top:51.6px" width="14" height="13" viewBox="0 0 14 13"><rect x=".5" y=".5" width="13" height="12" fill="#f4ecec" stroke="#5a5a5a"/><rect x="1" y="1" width="12" height="2" fill="#8aa88a"/><path d="M3 3 V10.5 H12" fill="none" stroke="#a04040" stroke-width=".8"/><path d="M4.5 4 L7 8 L9 4.5" fill="none" stroke="#602020" stroke-width="1"/></svg>
<svg style="left:41.0px;top:68.4px" width="14" height="13" viewBox="0 0 14 13"><rect x=".5" y=".5" width="13" height="12" fill="#f8a030" stroke="#6a3a10"/><path d="M.5 6 L4 2.5 L7 5 L10 2 L13.5 5.5 V12.5 H.5Z" fill="#fde070"/><path d="M.5 8 C3 6 5 10 7.5 8.5 C10 7 11.5 9 13.5 8 V12.5 H.5Z" fill="#2a3ab0"/><path d="M.5 7.5 C3 5.5 5 9.5 7.5 8 C10 6.5 11.5 8.5 13.5 7.5" fill="none" stroke="#fff" stroke-width="1"/></svg>
<svg style="left:41.0px;top:85.2px" width="14" height="13" viewBox="0 0 14 13"><rect x=".5" y=".5" width="13" height="12" fill="#f8a030" stroke="#6a3a10"/><path d="M.5 6 L4 2.5 L7 5 L10 2 L13.5 5.5 V12.5 H.5Z" fill="#fde070"/><path d="M.5 8 C3 6 5 10 7.5 8.5 C10 7 11.5 9 13.5 8 V12.5 H.5Z" fill="#2a3ab0"/><path d="M.5 7.5 C3 5.5 5 9.5 7.5 8 C10 6.5 11.5 8.5 13.5 7.5" fill="none" stroke="#fff" stroke-width="1"/></svg>
<svg style="left:41.0px;top:102.0px" width="14" height="13" viewBox="0 0 14 13"><path d="M4 0 L5 2" stroke="#802020" stroke-width="1"/><ellipse cx="5" cy="3.5" rx="3.2" ry="2.8" fill="#e02020"/><ellipse cx="5" cy="6.5" rx="4.6" ry="2.8" fill="#f0d820"/><ellipse cx="5" cy="9" rx="3.4" ry="2.4" fill="#30b040"/><path d="M5 3 C3 3 3 5 5 5" fill="#f06020"/><path d="M3 11 L1 13 M6 11.5 H13.5" stroke="#2a6a2a" stroke-width="1.1"/></svg>
<svg style="left:23.0px;top:118.8px" width="14" height="13" viewBox="0 0 14 13"><rect x=".5" y=".5" width="13" height="11" fill="#fff" stroke="#4a4a4a"/><path d="M4 10 V3.5 M7 10 V2.5 M10 10 V3.5" stroke="#d03030" stroke-width="1"/><path d="M2.5 5.5 L4 3 L5.5 5.5 M5.5 4.5 L7 2 L8.5 4.5 M8.5 5.5 L10 3 L11.5 5.5" fill="none" stroke="#d03030" stroke-width=".9"/></svg>
<svg style="left:22.0px;top:135.6px" width="14" height="13" viewBox="0 0 14 13"><rect x="0" y="0" width="6" height="6" fill="#d03a1a"/><rect x="2" y="2" width="6" height="6" fill="#e8a020"/><rect x="4" y="4" width="6" height="6" fill="#20a040"/><rect x="7" y="7" width="7" height="6" rx="1" fill="#1a2aa0"/></svg>
</div>
<div class="a" style="left:176px;top:23.500px;width:16px;height:150px;background:#f0f0f0"></div>
<svg style="left:180px;top:31px" width="7" height="4" viewBox="0 0 7 4"><path d="M0 4 L3.5 0 L7 4Z" fill="#555"/></svg>
<svg style="left:180px;top:162px" width="7" height="4" viewBox="0 0 7 4"><path d="M0 0 L3.5 4 L7 0Z" fill="#333"/></svg>
<div class="a" style="left:176.5px;top:77px;width:14px;height:55px;border:1px solid #9a9a9a;border-radius:2px;background:linear-gradient(90deg,#f4f4f4 0,#e4e4e4 45%,#cfcfcf 55%,#dcdcdc 100%)"></div>
<div class="a" style="left:180px;top:101px;width:7px;height:6px;background:repeating-linear-gradient(180deg,#6a6a6a 0,#6a6a6a 1px,#f0f0f0 1px,#f0f0f0 2px)"></div>
<div class="a" style="left:12.500px;top:173px;width:179.500px;height:15.500px;background:#f0f0f0"></div>
<svg style="left:19px;top:177px" width="4" height="7" viewBox="0 0 4 7"><path d="M4 0 L0 3.5 L4 7Z" fill="#444"/></svg>
<svg style="left:165px;top:177px" width="4" height="7" viewBox="0 0 4 7"><path d="M0 0 L4 3.5 L0 7Z" fill="#444"/></svg>
<div class="a" style="left:48.5px;top:173.5px;width:96px;height:14px;border:1px solid #9a9a9a;border-radius:2px;background:linear-gradient(180deg,#f4f4f4 0,#e4e4e4 45%,#cfcfcf 55%,#dcdcdc 100%)"></div>
<div class="a" style="left:92px;top:178px;width:6px;height:6px;background:repeating-linear-gradient(90deg,#6a6a6a 0,#6a6a6a 1px,#e8e8e8 1px,#e8e8e8 2px)"></div>
<div class="a" style="left:9.5px;top:189px;width:43.5px;height:17.5px;background:#f0f0f0;border:1.5px solid #7c7c7c;border-top:none;border-left:1px solid #e0e0e0;border-radius:0 0 3px 3px"></div>
<div class="tr" style="left:15.3px;top:193px;font-size:11px;transform-origin:0 0;transform:scaleX(.876)">Project</div>
</div>
<!-- LEFT: PROPERTIES -->
<div id="props" class="a" style="left:0;top:343px;width:206px;height:222px">
<div class="a" style="left:0;top:-1px;width:203px;height:1.5px;background:#6e6e6e"></div>
<div class="hdr" style="left:3px;top:3.5px;width:198px"><span style="display:inline-block;transform-origin:0 0;transform:scaleX(1.013)">Properties</span></div>
<svg style="left:179px;top:8px" width="6" height="4" viewBox="0 0 6 4"><path d="M0 4 L3 0 L6 4Z" fill="#222"/></svg>
<svg style="left:189px;top:7px" width="7" height="6" viewBox="0 0 7 6"><path d="M.5 .3 L6.5 5.7 M6.5 .3 L.5 5.7" stroke="#111" stroke-width="1.5"/></svg>
<div class="a" style="left:11px;top:23.5px;width:186px;height:172px;background:#f0f0f0;border:1.5px solid #7c7c7c;border-left-color:#8c8c8c;border-top-color:#8c8c8c"></div>
<div class="a" style="left:12.500px;top:25px;width:179.500px;height:168px;background:#fff"></div>
<div class="a" style="left:13px;top:25.5px;width:59.5px;height:19px;background:#f0f0f0;border-right:1.5px solid #7a7a7a;border-bottom:1.5px solid #7a7a7a;box-shadow:inset 1px 1px 0 #fff"></div>
<div class="a" style="left:72.5px;top:25.5px;width:119px;height:19px;background:#f0f0f0;border-right:1.5px solid #7a7a7a;border-bottom:1.5px solid #7a7a7a;box-shadow:inset 1px 1px 0 #fff"></div>
<div class="tr" style="left:30.3px;top:28.9px;transform-origin:0 0;transform:scaleX(0.896)">Name</div>
<div class="tr" style="left:119.0px;top:28.9px;transform-origin:0 0;transform:scaleX(0.954)">Value</div>
<div class="tr" style="left:15.3px;top:47.4px;transform-origin:0 0;transform:scaleX(0.882)">Name</div>
<div class="tr" style="left:75.3px;top:47.4px;transform-origin:0 0;transform:scaleX(0.935)">3D Polar Plot 2</div>
<div class="tr" style="left:15.3px;top:65.9px;transform-origin:0 0;transform:scaleX(0.951)">Report Type</div>
<div class="tr" style="left:75.3px;top:65.9px;transform-origin:0 0;transform:scaleX(0.880)">Far Fields</div>
<div class="tr" style="left:15.3px;top:84.9px;transform-origin:0 0;transform:scaleX(0.955)">Display Ty...</div>
<div class="tr" style="left:75.3px;top:84.9px;transform-origin:0 0;transform:scaleX(0.928)">3D Polar Plot</div>
<div class="tr" style="left:14.8px;top:103.8px;transform-origin:0 0;transform:scaleX(0.929)">dB(GainTo...</div>
<div class="tr" style="left:75.3px;top:103.8px;transform-origin:0 0;transform:scaleX(0.953)">Phi ,Theta ,dB(GainTotal)</div>
<div class="a" style="left:13px;top:63.4px;width:179px;height:1px;background:#c4c4c4"></div>
<div class="a" style="left:13px;top:82.2px;width:179px;height:1px;background:#c4c4c4"></div>
<div class="a" style="left:13px;top:100.8px;width:179px;height:1px;background:#c4c4c4"></div>
<div class="a" style="left:13px;top:119.4px;width:179px;height:1px;background:#c4c4c4"></div>
<div class="a" style="left:72px;top:44.5px;width:1px;height:75px;background:#c4c4c4"></div>
<div class="a" style="left:191px;top:44.5px;width:1px;height:75px;background:#c4c4c4"></div>
<div class="a" style="left:9.5px;top:194.0px;width:43.5px;height:17px;background:#f0f0f0;border:1.5px solid #7c7c7c;border-top:none;border-left:1px solid #e0e0e0;border-radius:0 0 3px 3px"></div>
<div class="tr" style="left:15.5px;top:198.0px;font-size:11px;transform-origin:0 0;transform:scaleX(0.878)">Report</div>
</div>
<div class="a" style="left:203px;top:123px;width:1px;height:442px;background:#fafafa"></div>
<!-- DOCUMENT WINDOW -->
<div class="a" style="left:204px;top:122px;width:1076px;height:1px;background:#fbfbfb"></div><div id="doc" class="a" style="left:209.300px;top:123.800px;width:1069px;height:437.700px;background:#fff;border-left:1.400px solid #8a8a8a;border-top:2px solid #8a8a8a"></div><div class="a" style="left:1278.300px;top:124px;width:2px;height:438px;background:#ececec"></div>
<div id="legend" class="a" style="left:216px;top:132px;width:128px;height:288px;border:1px solid #2a2a2a;background:#fff">
<div class="a" style="left:8px;top:7.5px;font-family:'Liberation Mono',monospace;font-weight:bold;font-size:11px;letter-spacing:0.8px;line-height:12px;white-space:pre;color:#111">dB(GainTotal)</div>
<div class="a" style="left:6.9px;top:30.25px;width:32.5px;height:15.77px;background:#ff0000"></div>
<div class="a" style="left:6.9px;top:45.72px;width:32.5px;height:15.77px;background:#ff4400"></div>
<div class="a" style="left:6.9px;top:61.18px;width:32.5px;height:15.77px;background:#ff8800"></div>
<div class="a" style="left:6.9px;top:76.65px;width:32.5px;height:15.77px;background:#ffcc00"></div>
<div class="a" style="left:6.9px;top:92.11px;width:32.5px;height:15.77px;background:#eeff00"></div>
<div class="a" style="left:6.9px;top:107.58px;width:32.5px;height:15.77px;background:#aaff00"></div>
<div class="a" style="left:6.9px;top:123.04px;width:32.5px;height:15.77px;background:#66ff00"></div>
<div class="a" style="left:6.9px;top:138.51px;width:32.5px;height:15.77px;background:#22ff00"></div>
<div class="a" style="left:6.9px;top:153.97px;width:32.5px;height:15.77px;background:#00ff22"></div>
<div class="a" style="left:6.9px;top:169.44px;width:32.5px;height:15.77px;background:#00ff66"></div>
<div class="a" style="left:6.9px;top:184.91px;width:32.5px;height:15.77px;background:#00ffaa"></div>
<div class="a" style="left:6.9px;top:200.37px;width:32.5px;height:15.77px;background:#00ffee"></div>
<div class="a" style="left:6.9px;top:215.84px;width:32.5px;height:15.77px;background:#00ccff"></div>
<div class="a" style="left:6.9px;top:231.30px;width:32.5px;height:15.77px;background:#0088ff"></div>
<div class="a" style="left:6.9px;top:246.77px;width:32.5px;height:15.77px;background:#0044ff"></div>
<div class="a" style="left:6.9px;top:262.23px;width:32.5px;height:15.77px;background:#0000ff"></div>
<div class="lg" style="top:24.75px"> 1.3517e+001</div>
<div class="lg" style="top:40.22px"> 1.0414e+001</div>
<div class="lg" style="top:55.68px"> 7.3114e+000</div>
<div class="lg" style="top:71.15px"> 4.2087e+000</div>
<div class="lg" style="top:86.61px"> 1.1060e+000</div>
<div class="lg" style="top:102.08px">-1.9968e+000</div>
<div class="lg" style="top:117.54px">-5.0995e+000</div>
<div class="lg" style="top:133.01px">-8.2022e+000</div>
<div class="lg" style="top:148.47px">-1.1305e+001</div>
<div class="lg" style="top:163.94px">-1.4408e+001</div>
<div class="lg" style="top:179.41px">-1.7510e+001</div>
<div class="lg" style="top:194.87px">-2.0613e+001</div>
<div class="lg" style="top:210.34px">-2.3716e+001</div>
<div class="lg" style="top:225.80px">-2.6819e+001</div>
<div class="lg" style="top:241.27px">-2.9921e+001</div>
<div class="lg" style="top:256.73px">-3.3024e+001</div>
<div class="lg" style="top:272.20px">-3.6127e+001</div>
</div>
<!-- 3D PLOT -->
<svg style="left:640px;top:200px" width="280" height="230" viewBox="640 200 280 230">
<defs>
<clipPath id="bodyclip"><path id="bodyp" d="M743.8 247 C735 247 728 249.5 722 253 C714 257.500 708 264 704.500 271 C703 275 701 277.500 696 279.500 C690 283 684 287 679 293 C673 300 669 310 668 320 C667.5 332 671 343 677 353 C682 361 686 367 690 372.5 C697 379 705 387 712.5 392 C718 395 728 396.5 736 397 C744 398.5 752 399.5 760 399.5 C770 399.5 779 398 786 395.5 C795 392 803 385 808 377 C814 368 818 356 820.5 345 C822.5 335 822.5 322 819 310 C816 300 810 291 801 284.5 C797 281 792 279 789 274.500 C786 267 781 259.500 772.500 254.500 C765 250 755 247 743.8 247Z"/></clipPath>
<linearGradient id="vg" x1="0" y1="247" x2="0" y2="400" gradientUnits="userSpaceOnUse">
<stop offset="0" stop-color="#e80c00"/><stop offset=".15" stop-color="#ff1000"/><stop offset=".27" stop-color="#ff3000"/><stop offset=".34" stop-color="#ff6800"/><stop offset=".40" stop-color="#fca400"/><stop offset=".47" stop-color="#f4d808"/><stop offset=".55" stop-color="#eef410"/><stop offset=".68" stop-color="#e0f010"/><stop offset=".78" stop-color="#c4e414"/><stop offset=".88" stop-color="#9cd81c"/><stop offset="1" stop-color="#7ccc20"/>
</linearGradient>
<filter id="b3" x="-50%" y="-50%" width="200%" height="200%"><feGaussianBlur stdDeviation="3"/></filter>
<filter id="b5" x="-50%" y="-50%" width="200%" height="200%"><feGaussianBlur stdDeviation="5"/></filter>
<filter id="b8" x="-50%" y="-50%" width="200%" height="200%"><feGaussianBlur stdDeviation="8"/></filter>
<filter id="b1" x="-20%" y="-20%" width="140%" height="140%"><feGaussianBlur stdDeviation=".6"/></filter>
</defs>
<g filter="url(#b1)">
<g clip-path="url(#bodyclip)">
<rect x="660" y="240" width="170" height="165" fill="url(#vg)"/>
<!-- collar ring -->
<path d="M684 290 C686 307 715 321 745 321 C775 321 806 307 808 290" fill="none" stroke="#eccc10" stroke-width="20" filter="url(#b8)" opacity=".9"/>
<ellipse cx="690" cy="312" rx="20" ry="30" fill="#e4cc10" filter="url(#b8)" opacity=".8"/>
<ellipse cx="806" cy="312" rx="18" ry="32" fill="#f2b40c" filter="url(#b8)" opacity=".9"/>
<!-- centre bright yellow -->
<ellipse cx="748" cy="341" rx="46" ry="13" fill="#f0f410" filter="url(#b8)"/>
<!-- dome red -->
<ellipse cx="745" cy="268" rx="38" ry="24" fill="#ff0e00" filter="url(#b5)"/>
<ellipse cx="745" cy="289" rx="31" ry="11" fill="#ff2c00" filter="url(#b5)" opacity=".9"/>
<ellipse cx="745" cy="303" rx="27" ry="6" fill="#ff6a00" filter="url(#b5)" opacity=".75"/>
<!-- edge shading -->
<use href="#bodyp" fill="none" stroke="#b88a10" stroke-width="7" filter="url(#b3)" opacity=".55"/>
<!-- green bottom -->
<ellipse cx="742" cy="395" rx="60" ry="25" fill="#22ae30" filter="url(#b8)"/>
<ellipse cx="742" cy="392" rx="42" ry="13" fill="#18a436" filter="url(#b5)"/>
<ellipse cx="733" cy="378" rx="7" ry="4.5" fill="#28dc78" filter="url(#b3)"/>
</g>
</g>
<!-- Z axis -->
<path d="M744.4 248 V237" stroke="#b01414" stroke-width="1.2"/>
<path d="M744.4 226 L741.8 239 H747 Z" fill="#cc1616"/>
<text x="744.6" y="222.7" font-family="Liberation Sans, sans-serif" font-size="10.7" fill="#9c1c2c" stroke="#9c1c2c" stroke-width=".3">Z</text>
<text x="737.6" y="262.3" font-family="Liberation Sans, sans-serif" font-size="11" fill="#6a0806" opacity=".9" textLength="30" lengthAdjust="spacingAndGlyphs">Theta</text>
<!-- Y axis -->
<path d="M816 356.200 L864 365" stroke="#14148c" stroke-width="1.500"/>
<path d="M876.300 367 L862.400 361.800 L861 367.300 Z" fill="#1616c0"/>
<text x="879.6" y="368" font-family="Liberation Sans, sans-serif" font-size="11" font-weight="bold" fill="#14148c" textLength="6.500" lengthAdjust="spacingAndGlyphs">Y</text>
<!-- X axis -->
<path d="M727 373 L702 413.500" stroke="#22cc38" stroke-width="1.600"/>
<path d="M701.500 414.500 L703.500 404 L709 407.300 Z" fill="#20c034"/>
<text x="699.300" y="415.800" font-family="Liberation Sans, sans-serif" font-size="10" font-weight="bold" fill="#22c030">X</text>
<!-- Phi -->
<path d="M710.8 400.8 L722 402.6" stroke="#3a8a4a" stroke-width="1" stroke-dasharray="3 1.5"/>
<path d="M727.5 403.6 L720.5 401 L720 404.2 Z" fill="#1f7a38"/>
<text x="731.700" y="404.700" font-family="Liberation Sans, sans-serif" font-size="10" fill="#141414" textLength="16.400" lengthAdjust="spacingAndGlyphs">Phi</text>
</svg>
<!-- BOTTOM PANELS -->
<div class="a" style="left:0;top:562.5px;width:1280px;height:102px;background:#f0f0f0"></div>
<div class="a" style="left:0;top:566px;width:1280px;height:1.4px;background:#747474"></div>
<div class="a" style="left:3.5px;top:570px;width:12px;height:91px;border:1px solid #b4b4b4;border-radius:2px;background:#f0f0f0"></div>
<svg style="left:6.5px;top:575.5px" width="6" height="6" viewBox="0 0 6 6"><path d="M.4 .4 L5.6 5.6 M5.6 .4 L.4 5.6" stroke="#111" stroke-width="1.4"/></svg>
<svg style="left:8px;top:588px" width="3" height="5" viewBox="0 0 3 5"><path d="M3 0 L0 2.5 L3 5Z" fill="#222"/></svg>
<div class="a" style="left:3px;top:657px;width:62px;height:12px;font-size:10.200px;line-height:12px;white-space:nowrap;transform-origin:0 0;transform:rotate(-90deg) scaleX(.85)">Message Mana</div>
<div class="a" style="left:16.500px;top:570.800px;width:572px;height:87.700px;background:#fff;border:1.600px solid #808080;border-right-color:#d8d8d8;border-bottom-color:#d8d8d8"></div>
<div class="a" style="left:18px;top:572.5px;width:554px;height:85px;overflow:hidden">
<div class="a" style="left:46.2px;top:0;width:1px;height:85px;background:repeating-linear-gradient(180deg,#bcbcbc 0,#bcbcbc 1px,transparent 1px,transparent 2px)"></div>
<div class="a" style="left:46.2px;top:8.5px;width:10px;height:1px;background:repeating-linear-gradient(90deg,#bcbcbc 0,#bcbcbc 1px,transparent 1px,transparent 2px)"></div>
<svg style="left:72.2px;top:1.0px" width="14" height="14" viewBox="0 0 14 14"><path d="M7 .8 L13.4 12.2 H.6Z" fill="#e8c82a" stroke="#b89a1a" stroke-width=".9" stroke-linejoin="round"/><path d="M7 4 V8.6" stroke="#2a2410" stroke-width="1.7"/><circle cx="7" cy="10.5" r="1" fill="#2a2410"/></svg>
<div class="msg" style="left:92.9px;top:1.3px;transform-origin:0 0;transform:scaleX(0.955)">HFSSDesign1: Solutions have been invalidated. Undo to recover. (5:43:26&nbsp; сен 21, 2014)</div>
<div class="a" style="left:46.2px;top:23.4px;width:10px;height:1px;background:repeating-linear-gradient(90deg,#bcbcbc 0,#bcbcbc 1px,transparent 1px,transparent 2px)"></div>
<svg style="left:72.2px;top:16.4px" width="14" height="14" viewBox="0 0 14 14"><circle cx="7" cy="7" r="6.6" fill="#2f57c0"/><circle cx="7" cy="5.2" r="5" fill="#5a86e4" opacity=".75"/><circle cx="7" cy="3.6" r="1.1" fill="#fff"/><path d="M7 5.8 V11" stroke="#fff" stroke-width="2"/></svg>
<div class="msg" style="left:92.9px;top:16.2px;transform-origin:0 0;transform:scaleX(0.955)">Solution Setup 'Setup1', Sweep 'Sweep1': Interpolating sweep converged. (5:45:52&nbsp; сен 21, 2014)</div>
<div class="a" style="left:46.2px;top:38.3px;width:10px;height:1px;background:repeating-linear-gradient(90deg,#bcbcbc 0,#bcbcbc 1px,transparent 1px,transparent 2px)"></div>
<svg style="left:72.2px;top:31.3px" width="14" height="14" viewBox="0 0 14 14"><circle cx="7" cy="7" r="6.6" fill="#2f57c0"/><circle cx="7" cy="5.2" r="5" fill="#5a86e4" opacity=".75"/><circle cx="7" cy="3.6" r="1.1" fill="#fff"/><path d="M7 5.8 V11" stroke="#fff" stroke-width="2"/></svg>
<div class="msg" style="left:92.9px;top:31.1px;transform-origin:0 0;transform:scaleX(0.945)">Normal completion of simulation on server: Local Machine. (5:45:52&nbsp; сен 21, 2014)</div>
<div class="a" style="left:46.2px;top:53.3px;width:10px;height:1px;background:repeating-linear-gradient(90deg,#bcbcbc 0,#bcbcbc 1px,transparent 1px,transparent 2px)"></div>
<svg style="left:72.2px;top:45.8px" width="14" height="14" viewBox="0 0 14 14"><path d="M7 .8 L13.4 12.2 H.6Z" fill="#e8c82a" stroke="#b89a1a" stroke-width=".9" stroke-linejoin="round"/><path d="M7 4 V8.6" stroke="#2a2410" stroke-width="1.7"/><circle cx="7" cy="10.5" r="1" fill="#2a2410"/></svg>
<div class="msg" style="left:92.9px;top:46.1px;transform-origin:0 0;transform:scaleX(0.955)">HFSSDesign1: Solutions have been invalidated. Undo to recover. (5:46:52&nbsp; сен 21, 2014)</div>
<div class="a" style="left:46.2px;top:68.2px;width:10px;height:1px;background:repeating-linear-gradient(90deg,#bcbcbc 0,#bcbcbc 1px,transparent 1px,transparent 2px)"></div>
<svg style="left:72.2px;top:60.7px" width="14" height="14" viewBox="0 0 14 14"><path d="M7 .8 L13.4 12.2 H.6Z" fill="#e8c82a" stroke="#b89a1a" stroke-width=".9" stroke-linejoin="round"/><path d="M7 4 V8.6" stroke="#2a2410" stroke-width="1.7"/><circle cx="7" cy="10.5" r="1" fill="#2a2410"/></svg>
<div class="msg" style="left:92.9px;top:61.0px;transform-origin:0 0;transform:scaleX(0.952)">Adaptive Passes did not converge based on specified criteria. (5:48:15&nbsp; сен 21, 2014)</div>
<div class="a" style="left:46.2px;top:83.1px;width:10px;height:1px;background:repeating-linear-gradient(90deg,#bcbcbc 0,#bcbcbc 1px,transparent 1px,transparent 2px)"></div>
<svg style="left:72.2px;top:76.1px" width="14" height="14" viewBox="0 0 14 14"><circle cx="7" cy="7" r="6.6" fill="#2f57c0"/><circle cx="7" cy="5.2" r="5" fill="#5a86e4" opacity=".75"/><circle cx="7" cy="3.6" r="1.1" fill="#fff"/><path d="M7 5.8 V11" stroke="#fff" stroke-width="2"/></svg>
<div class="msg" style="left:92.9px;top:75.9px;transform-origin:0 0;transform:scaleX(0.955)">Solution Setup 'Setup1', Sweep 'Sweep1': Interpolating sweep converged. (5:49:28&nbsp; сен 21, 2014)</div>
</div>
<div class="a" style="left:572px;top:572.3px;width:15.5px;height:85px;background:#f0f0f0"></div>
<svg style="left:576px;top:578px" width="7" height="4" viewBox="0 0 7 4"><path d="M0 4 L3.5 0 L7 4Z" fill="#222"/></svg>
<svg style="left:576px;top:649px" width="7" height="4" viewBox="0 0 7 4"><path d="M0 0 L3.5 4 L7 0Z" fill="#222"/></svg>
<div class="a" style="left:572px;top:587px;width:15.5px;height:1.2px;background:#9a9a9a"></div>
<div class="a" style="left:572.5px;top:626px;width:14.5px;height:12px;border:1px solid #9a9a9a;border-radius:2px;background:linear-gradient(90deg,#f6f6f6 0,#e6e6e6 45%,#d2d2d2 55%,#dedede 100%)"></div>
<div class="a" style="left:595px;top:567px;width:1.4px;height:96px;background:#7a7a7a"></div>
<div class="a" style="left:597px;top:567px;width:1px;height:96px;background:#fafafa"></div>
<div class="a" style="left:599.5px;top:570px;width:12px;height:91px;border:1px solid #b4b4b4;border-radius:2px;background:#f0f0f0"></div>
<svg style="left:602.5px;top:575.5px" width="6" height="6" viewBox="0 0 6 6"><path d="M.4 .4 L5.6 5.6 M5.6 .4 L.4 5.6" stroke="#111" stroke-width="1.4"/></svg>
<svg style="left:604px;top:588px" width="3" height="5" viewBox="0 0 3 5"><path d="M3 0 L0 2.5 L3 5Z" fill="#222"/></svg>
<div class="a" style="left:599px;top:657px;width:40px;height:12px;font-size:10.200px;line-height:12px;white-space:nowrap;transform-origin:0 0;transform:rotate(-90deg) scaleX(.86)">Progress</div>
<div class="a" style="left:614.5px;top:571.200px;width:662px;height:87px;background:#fff;border:1.600px solid #808080;border-bottom-color:#d8d8d8;border-right-color:#e4e4e4"></div>
<!-- STATUS BAR -->
<div class="a" style="left:0;top:662px;width:1280px;height:1px;background:#a8a8a8"></div><div class="a" style="left:0;top:663px;width:1280px;height:1px;background:#fcfcfc"></div>
<div class="a" style="left:2.500px;top:668.600px;font-size:11px;line-height:12px;white-space:nowrap;transform-origin:0 0;transform:scaleX(.925)">Ready</div>
<div class="a" style="left:1186px;top:666.5px;width:27px;height:15px;border:1px solid #a6a6a6;border-right-color:#fff;border-bottom-color:#fff"></div>
<div class="a" style="left:1215px;top:666.5px;width:34px;height:15px;border:1px solid #a6a6a6;border-right-color:#fff;border-bottom-color:#fff"></div>
<div class="a" style="left:1250px;top:666.5px;width:31px;height:15px;border:1px solid #a6a6a6;border-right-color:#fff;border-bottom-color:#fff"></div>
<div class="a" style="left:1217.400px;top:668.800px;font-size:11px;line-height:12px;white-space:nowrap;transform-origin:0 0;transform:scaleX(1.05)">NUM</div>
<!-- TASKBAR -->
<div id="task" class="a" style="left:0;top:682px;width:1280px;height:38px;overflow:hidden;background:linear-gradient(90deg,#8aa3c2 0,#8ea8c8 3.5%,#a3bedd 5.5%,#abc6e4 12%,#a6c1e0 22%,#a9c4e3 45%,#b3cdea 60%,#b0cae8 76%,#a6c2e2 80%,#8eaed2 83.500%,#7a9ac0 87.500%,#7191b9 93%,#6e8eb6 100%)">
<div class="a" style="left:0;top:0;width:1280px;height:1px;background:#6f8199"></div>
<div class="a" style="left:0;top:1px;width:1280px;height:1px;background:rgba(255,255,255,.35)"></div>
<!-- diagonal glass streaks -->
<div class="a" style="left:735px;top:-10px;width:46px;height:60px;background:rgba(255,255,255,.13);transform:skewX(-35deg)"></div>
<div class="a" style="left:850px;top:-10px;width:60px;height:60px;background:rgba(255,255,255,.10);transform:skewX(-35deg)"></div>
<div class="a" style="left:640px;top:-10px;width:30px;height:60px;background:rgba(255,255,255,.08);transform:skewX(-35deg)"></div>
<!-- start orb -->
<svg style="left:6px;top:0" width="40" height="38" viewBox="0 0 40 38"><defs><radialGradient id="orb" cx=".5" cy=".35" r=".7"><stop offset="0" stop-color="#7cc4ee"/><stop offset=".5" stop-color="#2a78c4"/><stop offset="1" stop-color="#123c7a"/></radialGradient></defs><circle cx="19.3" cy="18.6" r="17" fill="url(#orb)" stroke="#4a6e98" stroke-width="1"/><ellipse cx="19.3" cy="30" rx="11" ry="5" fill="#4ad0f0" opacity=".55"/><path d="M11.5 11.5 C14 10 16.5 10.3 18.5 11.5 L17.2 18 C15 16.8 12.8 16.8 10.3 18Z" fill="#e8642a"/><path d="M20 11.8 C22.5 13 25 13 27.8 11.5 L26.5 18 C24 19.3 21.5 19.3 18.8 18.2Z" fill="#8ec43a"/><path d="M10 19.5 C12.5 18.3 15 18.5 17 19.6 L15.6 26 C13.5 24.8 11.2 24.8 8.8 26Z" fill="#3a9ae0"/><path d="M18.4 20 C21 21 23.5 21 26.2 19.6 L24.8 26 C22.3 27.3 19.8 27.3 17 26.2Z" fill="#f4c02a"/><ellipse cx="19.3" cy="9" rx="13" ry="6.5" fill="#fff" opacity=".22"/></svg>
<!-- explorer -->
<svg style="left:68px;top:5px" width="32" height="30" viewBox="0 0 32 30"><path d="M2 5 H11 L13 7.5 H29 V27 H2Z" fill="#f3dc8c" stroke="#d8b85a" stroke-width=".8"/><rect x="4" y="3" width="4" height="3" fill="#5aa83a"/><rect x="11" y="5" width="3" height="3" fill="#d0503a"/><rect x="16" y="6" width="11" height="3" fill="#f8f4e0"/><path d="M2 11 H29 V27 H2Z" fill="#f6e6a4"/><path d="M2 13 H29" stroke="#e8d080" stroke-width="1"/><path d="M5 17 H27 V28 H22 V22 H10 V28 H5Z" fill="#6aa8e0" stroke="#4a88c8" stroke-width=".8"/><path d="M5 17 H27 V20 H5Z" fill="#9ccaf0"/><path d="M7 28 V23 M25 28 V23" stroke="#8ab8e0"/></svg>
<!-- wmp -->
<svg style="left:126px;top:7px" width="28" height="26" viewBox="0 0 28 26"><path d="M22 2 H26 V22 H22Z M24 4 H27.5 V20 H24Z" fill="#9cc4ea" stroke="#6a9ad0" stroke-width=".6"/><rect x="1.5" y="2" width="21" height="22" fill="#4a96dc" stroke="#2a6ab8"/><circle cx="12" cy="13" r="8.2" fill="#f07a1e" stroke="#d85a10" stroke-width=".8"/><circle cx="12" cy="11" r="6" fill="#f89a40" opacity=".6"/><path d="M9.2 8 L17 13 L9.2 18Z" fill="#fff"/></svg>
<!-- opera button -->
<div class="a" style="left:172px;top:.5px;width:56px;height:36.500px;border:1px solid #62748c;border-radius:2px;background:linear-gradient(180deg,rgba(255,255,255,.55) 0,rgba(255,255,255,.38) 48%,rgba(255,255,255,.22) 52%,rgba(255,255,255,.32) 100%);box-shadow:inset 0 0 0 1px rgba(255,255,255,.5)"></div>
<svg style="left:185px;top:4px" width="28" height="30" viewBox="0 0 28 30"><defs><linearGradient id="op" x1="0" y1="0" x2="0" y2="1"><stop offset="0" stop-color="#f4403a"/><stop offset=".5" stop-color="#e01c18"/><stop offset="1" stop-color="#b81010"/></linearGradient></defs><ellipse cx="14" cy="14.8" rx="13.3" ry="14.2" fill="url(#op)"/><ellipse cx="14" cy="14.8" rx="3.6" ry="10.2" fill="#d6e4f4"/><ellipse cx="14" cy="7" rx="10" ry="5" fill="#fff" opacity=".18"/></svg>
<!-- speaker icon -->
<svg style="left:242px;top:5px" width="32" height="30" viewBox="0 0 32 30"><defs><linearGradient id="sp" x1="0" y1="0" x2="0" y2="1"><stop offset="0" stop-color="#7ab2e2"/><stop offset=".6" stop-color="#4a8ac4"/><stop offset="1" stop-color="#34699e"/></linearGradient></defs><path d="M2 1 H20 L30.5 14.5 L20 28.5 H2Z" fill="url(#sp)"/><path d="M2 22 H25 L20 28.5 H2Z" fill="#2f5f92" opacity=".7"/><path d="M5 11 H9 L14 6.5 V22.5 L9 18 H5Z" fill="#fff"/><path d="M16.5 10.5 C19 12.5 19 16.5 16.5 18.5 M18.5 7.5 C23 11 23 18 18.5 21.5" fill="none" stroke="#fff" stroke-width="1.7"/></svg>
<!-- squiggle button (stacked) -->
<div class="a" style="left:294px;top:.5px;width:50px;height:36.500px;border:1px solid #62748c;border-radius:2px;background:rgba(255,255,255,.3)"></div>
<div class="a" style="left:291px;top:.5px;width:50px;height:36.500px;border:1px solid #62748c;border-radius:2px;background:#b4cbe6"></div>
<div class="a" style="left:288.5px;top:.5px;width:48px;height:36.500px;border:1px solid #62748c;border-radius:2px;background:linear-gradient(180deg,#cfdff2 0,#bed2ea 48%,#aec6e2 52%,#b8cee8 100%);box-shadow:inset 0 0 0 1px rgba(255,255,255,.5)"></div>
<svg style="left:297px;top:4px" width="32" height="30" viewBox="0 0 32 30"><rect x="0" y="0" width="31" height="29" fill="#cfc2da"/><rect x="0" y="0" width="31" height="29" fill="#e0d0c8" opacity=".4"/><path d="M6 3 C10 9 17 9 21 7 C25 5 27 8 24 11 C20 15 10 19 8 22 C7 24 12 25 17 23" fill="none" stroke="#a0704a" stroke-width="2.2"/><path d="M7 2 C9 8 16 9 21 8 C27 7 27 11 23 14 C19 17 15 19 14 22 C13 25 19 27 25 24" fill="none" stroke="#2a2a6a" stroke-width="1.6"/><path d="M20 25 C23 27 26 26 28 25" fill="none" stroke="#c87838" stroke-width="1.6"/></svg>
<!-- photo viewer button -->
<div class="a" style="left:346.5px;top:.5px;width:55px;height:36.500px;border:1px solid #62748c;border-radius:2px;background:linear-gradient(180deg,#cfdff2 0,#bed2ea 48%,#aec6e2 52%,#b8cee8 100%);box-shadow:inset 0 0 0 1px rgba(255,255,255,.5)"></div>
<svg style="left:359px;top:5px" width="30" height="26" viewBox="0 0 30 26"><defs><linearGradient id="ph" x1="0" y1="0" x2="0" y2="1"><stop offset="0" stop-color="#7ac0f0"/><stop offset=".45" stop-color="#d8ecf4"/><stop offset=".55" stop-color="#5a9a8a"/><stop offset="1" stop-color="#1f4a4a"/></linearGradient></defs><rect x="1" y="1" width="28" height="24" fill="#e8f0f8" stroke="#3a7ec0" stroke-width="1.6"/><rect x="3.5" y="3.5" width="23" height="19" fill="url(#ph)"/><path d="M3.5 14 C10 9 16 13 26.5 10 V15 H3.5Z" fill="#3a7a6a" opacity=".8"/><path d="M0 0 H6 V2 H2 V6 H0Z M30 0 H24 V2 H28 V6 H30Z M0 26 H6 V24 H2 V20 H0Z M30 26 H24 V24 H28 V20 H30Z" fill="#3a80c4"/></svg>
<!-- paint button -->
<div class="a" style="left:404.5px;top:.5px;width:55px;height:36.500px;border:1px solid #62748c;border-radius:2px;background:linear-gradient(180deg,#cfdff2 0,#bed2ea 48%,#aec6e2 52%,#b8cee8 100%);box-shadow:inset 0 0 0 1px rgba(255,255,255,.5)"></div>
<svg style="left:417px;top:4px" width="32" height="30" viewBox="0 0 32 30"><ellipse cx="13" cy="18" rx="12" ry="9.5" transform="rotate(-18 13 18)" fill="#e8f2fc" stroke="#7aa8d8" stroke-width="1.2"/><ellipse cx="8" cy="23" rx="2.6" ry="2" fill="#b4cbe6"/><circle cx="7" cy="16" r="2.2" fill="#e05a4a"/><circle cx="11.5" cy="11.5" r="2.2" fill="#5ab86a"/><circle cx="17.5" cy="10.5" r="2.2" fill="#e8a83a"/><circle cx="15" cy="18.5" r="2.2" fill="#5a9ae0"/><path d="M29 2 C31 4 28 8 24 13 L21 12 C23 7 27 1 29 2Z" fill="#e8a050" stroke="#c07830" stroke-width=".6"/><path d="M24 13 L21 12 C19 17 18 23 16 28 C19 24 22 19 24 13Z" fill="#d88a40" stroke="#a86a28" stroke-width=".6"/></svg>
<!-- floppy button -->
<div class="a" style="left:462.5px;top:.5px;width:55px;height:36.500px;border:1px solid #62748c;border-radius:2px;background:linear-gradient(180deg,#cfdff2 0,#bed2ea 48%,#aec6e2 52%,#b8cee8 100%);box-shadow:inset 0 0 0 1px rgba(255,255,255,.5)"></div>
<svg style="left:475px;top:3px" width="30" height="30" viewBox="0 0 30 30"><path d="M1 2 C1 1 2 .5 3 .5 H25 L29.5 5 V28 C29.5 29 29 29.5 28 29.5 H2.5 C1.5 29.5 1 29 1 28Z" fill="#2344b0"/><rect x="9" y="1" width="12" height="9" fill="#c8d4ec"/><rect x="15.5" y="2" width="3.5" height="6.5" fill="#2344b0"/><rect x="5" y="14" width="20.5" height="14" fill="#fff"/><path d="M5 17 H25.5 M5 20.5 H25.5 M5 24 H25.5" stroke="#d04040" stroke-width="1.4"/></svg>
<!-- ansoft button (active) -->
<div class="a" style="left:520.5px;top:.5px;width:55px;height:36.500px;border:1px solid #62748c;border-radius:2px;background:linear-gradient(180deg,#e6eef8 0,#d8e4f2 48%,#ccdcee 52%,#d6e4f4 100%);box-shadow:inset 0 0 0 1px rgba(255,255,255,.7)"></div>
<svg style="left:533px;top:3.500px" width="31" height="31" viewBox="0 0 31 31"><defs><linearGradient id="an" x1="0" y1="0" x2="1" y2=".4"><stop offset="0" stop-color="#b88ae6"/><stop offset=".45" stop-color="#8a4cc8"/><stop offset=".7" stop-color="#5a18a8"/><stop offset="1" stop-color="#4a108c"/></linearGradient><linearGradient id="an2" x1="0" y1="0" x2="0" y2="1"><stop offset="0" stop-color="#ffffff"/><stop offset=".6" stop-color="#fbd8c0"/><stop offset="1" stop-color="#f4c8e8"/></linearGradient></defs><circle cx="15.300" cy="15.600" r="14.700" fill="url(#an)"/><path d="M1.500 20 C5 30 25 31 29.500 19 C24 24 8 25 1.500 20Z" fill="#4a0c94" opacity=".8"/><path d="M14.800 1.700 L25.900 21.700 H5.300Z" fill="url(#an2)"/><path d="M13.100 5.600 L22.500 21.700 M9.500 11.200 L15.900 21.700" stroke="#7a1a2a" stroke-width="1.300"/></svg>
<!-- tray -->
<div class="a" style="left:1057px;top:11.500px;font-size:11px;line-height:12px;color:#e6edf6;transform-origin:0 0;transform:scaleX(.92)">RU</div>
<svg style="left:1086px;top:18px" width="8" height="5" viewBox="0 0 8 5"><path d="M0 5 L4 0 L8 5Z" fill="#eef3fa"/></svg>
<!-- power -->
<svg style="left:1105px;top:11px" width="16" height="17" viewBox="0 0 16 17"><rect x="1" y="2" width="9" height="13" rx="1" fill="#f4f4f0" stroke="#5a5a5a" stroke-width=".9"/><rect x="3.5" y=".5" width="4" height="2" fill="#8a8a8a"/><path d="M8 3 V6 M12 3 V6" stroke="#444" stroke-width="1.2"/><path d="M6.5 6 H13.5 V9 C13.5 11 11.5 11.5 10 11.5 C8.5 11.5 6.5 11 6.5 9Z" fill="#fff" stroke="#444" stroke-width=".9"/><path d="M10 11.5 V14 C10 15.5 8 15.5 6 15.5" fill="none" stroke="#444" stroke-width="1"/></svg>
<!-- network bars -->
<svg style="left:1127px;top:12px" width="17" height="14" viewBox="0 0 17 14"><path d="M1 13 V10 H3 V13Z M4.5 13 V8 H6.5 V13Z M8 13 V5.5 H10 V13Z M11.5 13 V3 H13.5 V13Z" fill="#ffffff" stroke="#465066" stroke-width=".8"/><path d="M15 13 V1 H16.500 V13Z" fill="#dfe5ee" stroke="#465066" stroke-width=".6"/></svg>
<!-- flag -->
<svg style="left:1151px;top:10px" width="16" height="18" viewBox="0 0 16 18"><path d="M2 1 V17" stroke="#e8e8e8" stroke-width="1.6"/><path d="M3 2 C6 .5 8 3.5 12 2 V9 C8 10.5 6 7.500 3 9Z" fill="#f6f6f6" stroke="#8a8a8a" stroke-width=".6"/><circle cx="10.5" cy="12.5" r="4.3" fill="#d83a3a" stroke="#a01818" stroke-width=".6"/><path d="M8.6 10.6 L12.4 14.4 M12.4 10.6 L8.6 14.4" stroke="#fff" stroke-width="1.4"/></svg>
<!-- volume -->
<svg style="left:1172px;top:11px" width="17" height="16" viewBox="0 0 17 16"><path d="M1.500 5.500 H4.500 L8.500 1.500 V14.500 L4.500 10.500 H1.500Z" fill="#f6f6f6" stroke="#6a7484" stroke-width=".8"/><path d="M10.5 5 C12 6.500 12 9.500 10.5 11 M12.5 3 C15.500 5.500 15.500 10.500 12.500 13" fill="none" stroke="#f0f3f8" stroke-width="1.2"/></svg>
<div class="a" style="left:1217px;top:6.800px;font-size:11px;line-height:12px;color:#eef3fa;white-space:nowrap;transform-origin:0 0;transform:scaleX(.96)">17:49</div>
<div class="a" style="left:1205px;top:22.200px;font-size:11px;line-height:12px;color:#eef3fa;white-space:nowrap;transform-origin:0 0;transform:scaleX(.905)">21.09.2014</div>
<!-- show desktop -->
<div class="a" style="left:1267px;top:1px;width:13px;height:37px;border-left:1px solid #51647e;background:linear-gradient(90deg,#9ab0cc 0,#7c98ba 40%,#8aa4c4 100%);box-shadow:inset 1px 0 0 rgba(255,255,255,.45)"></div>
</div>
</div></body></html>
